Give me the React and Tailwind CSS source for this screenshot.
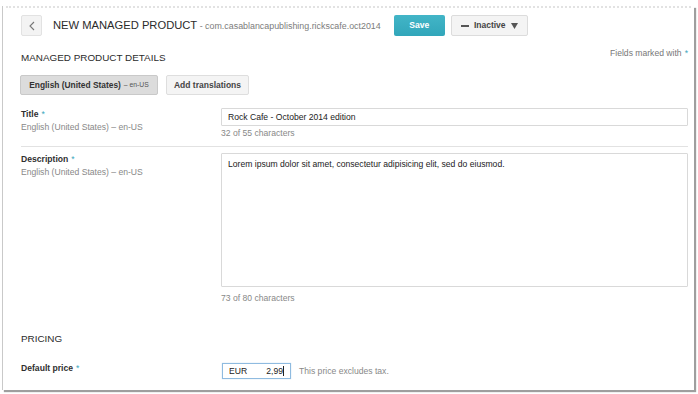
import React from 'react';

const Star = () => <span className="ml-[3px] font-normal text-[#3aa6bd]">*</span>;

const FieldLabel = ({ title, locale }) => (
  <div className="w-[200px] shrink-0">
    <div className="text-[8.6px] leading-[12px] font-bold text-[#2f2f2f]">
      {title}
      <Star />
    </div>
    {locale && (
      <div className="mt-px text-[8.6px] leading-[12px] text-[#888]">{locale}</div>
    )}
  </div>
);

const App = () => {
  const locale = 'English (United States) – en-US';

  return (
    <div
      className="w-[698px] h-[394px] bg-white pt-[6px] pl-[2px] pr-[4px] pb-[4px]"
      style={{ fontFamily: '"Liberation Sans", Arial, Helvetica, sans-serif' }}
    >
      <div className="h-full flex flex-col bg-white border-l border-[#c9c9c9] shadow-[2px_2px_1px_rgba(0,0,0,0.38)]">
        {/* top edge */}
        <div className="h-[2px] mx-[3px] border-t-2 border-dotted border-[#e2e2e2]" />

        <div className="flex-1 pl-[18px] pr-[6px]">
          {/* Header */}
          <div className="mt-[7px] h-[21px] flex items-center">
            <button className="w-[21px] h-[21px] flex items-center justify-center bg-[#f3f3f3] border border-[#e2e2e2] rounded-[2px]">
              <svg width="6" height="10" viewBox="0 0 6 10" fill="none">
                <path d="M5 1L1 5l4 4" stroke="#777" strokeWidth="1.1" />
              </svg>
            </button>
            <h1 className="ml-[11px] text-[11.2px] leading-[14px] text-[#2b2b2b] whitespace-nowrap">
              NEW MANAGED PRODUCT
              <span className="text-[8.9px] text-[#7c7c7c]"> - com.casablancapublishing.rickscafe.oct2014</span>
            </h1>
            <button className="ml-[13px] w-[51px] h-[21px] rounded-[2px] bg-gradient-to-b from-[#42b5c7] to-[#31a6ba] text-white text-[8.6px] font-bold">
              Save
            </button>
            <button className="ml-[6px] w-[77px] h-[21px] rounded-[2px] bg-[#f4f4f4] border border-[#dcdcdc] flex items-center justify-center gap-[5px] text-[8.5px] font-bold text-[#444]">
              <span className="w-[8px] h-[2px] bg-[#555]" />
              <span>Inactive</span>
              <svg width="7" height="6" viewBox="0 0 7 6">
                <path d="M0 0h7L3.5 6z" fill="#555" />
              </svg>
            </button>
          </div>

          {/* Section heading */}
          <div className="mt-[11px] flex justify-between">
            <h2 className="pt-[5px] text-[9.9px] leading-[12px] text-[#2b2b2b]">MANAGED PRODUCT DETAILS</h2>
            <div className="text-[8.6px] leading-[12px] text-[#777]">
              Fields marked with<span className="ml-[3px] text-[#3aa6bd]">*</span>
            </div>
          </div>

          {/* Language tabs */}
          <div className="mt-[11px] -ml-px flex gap-[8px]">
            <button className="w-[138px] h-[20px] flex items-center justify-center rounded-[2px] bg-[#dcdcdc] border border-[#c9c9c9] text-[#333] whitespace-nowrap">
              <span className="text-[8.4px] font-bold">English (United States)</span>
              <span className="ml-[3px] text-[6.8px] text-[#555]">– en-US</span>
            </button>
            <button className="w-[83px] h-[20px] rounded-[2px] bg-[#f4f4f4] border border-[#dedede] text-[8.5px] font-bold text-[#444]">
              Add translations
            </button>
          </div>

          {/* Title */}
          <div className="mt-[13px] flex">
            <FieldLabel title="Title" locale={locale} />
            <div className="flex-1">
              <div className="h-[18px] px-[6px] flex items-center border border-[#d9d9d9] rounded-[1px] text-[8.6px] text-[#222]">
                Rock Cafe - October 2014 edition
              </div>
              <div className="mt-px text-[8.6px] leading-[12px] text-[#888]">32 of 55 characters</div>
            </div>
          </div>

          <div className="mt-[7px] h-px bg-[#e2e2e2]" />

          {/* Description */}
          <div className="mt-[6px] flex">
            <FieldLabel title="Description" locale={locale} />
            <div className="flex-1">
              <div className="h-[134px] px-[6px] pt-[4px] border border-[#d9d9d9] rounded-[1px] text-[8.6px] leading-[12px] text-[#222]">
                Lorem ipsum dolor sit amet, consectetur adipisicing elit, sed do eiusmod.
              </div>
              <div className="mt-[5px] text-[8.6px] leading-[12px] text-[#888]">73 of 80 characters</div>
            </div>
          </div>

          {/* Pricing */}
          <h2 className="mt-[29px] text-[9.9px] leading-[12px] text-[#2b2b2b]">PRICING</h2>

          <div className="mt-[17px] flex">
            <FieldLabel title="Default price" />
            <div className="flex-1 flex items-center mt-px">
              <div className="ml-px w-[69px] h-[16px] pl-[6px] pr-[6px] flex items-center justify-between border border-[#8fbbe0] shadow-[0_0_1px_#b7d5ee] text-[8.6px] text-[#222]">
                <span>EUR</span>
                <span className="flex items-center">
                  2,99
                  <span className="w-px h-[10px] bg-[#222]" />
                </span>
              </div>
              <span className="ml-[8px] text-[8.6px] text-[#888]">This price excludes tax.</span>
            </div>
          </div>
        </div>
      </div>
    </div>
  );
};

export default App;
